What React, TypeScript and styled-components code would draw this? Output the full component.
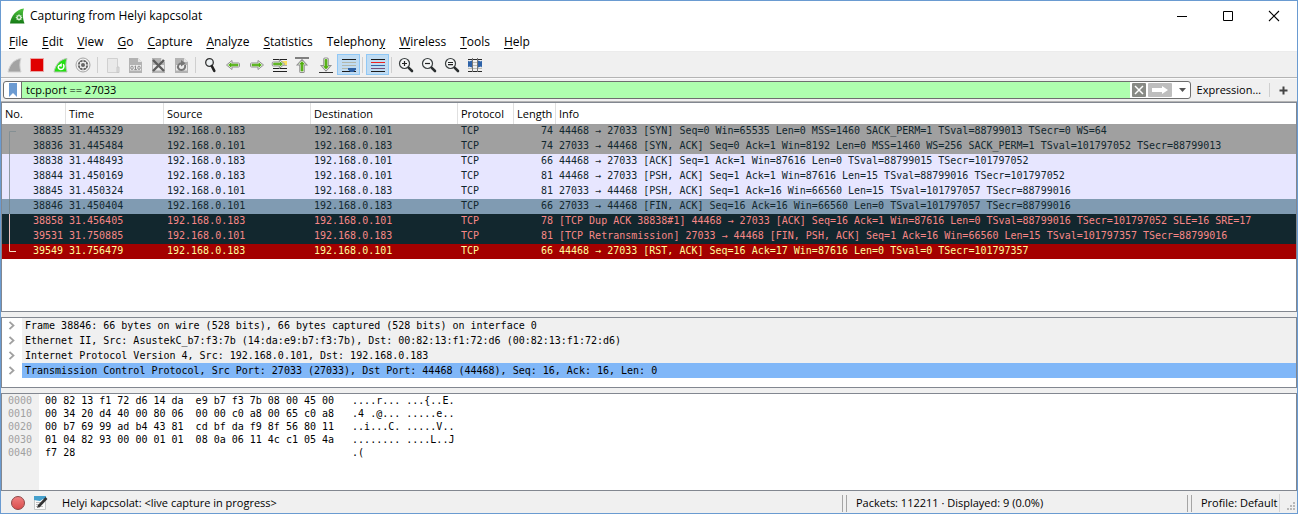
import React, { useState } from "react";
import styled, { createGlobalStyle, css } from "styled-components";

const ui = `"Open Sans", "Noto Sans", sans-serif`;
const mono = `"DejaVu Sans Mono", "Liberation Mono", monospace`;

const GlobalStyle = createGlobalStyle`
  *, *::before, *::after { box-sizing: border-box; }
  body { margin: 0; background: #f0f0f0; color: #000; font: 11px/16px ${ui}; }
  button, input { font: inherit; color: inherit; margin: 0; padding: 0; border: 0; background: none; border-radius: 0; }
  ul { list-style: none; margin: 0; padding: 0; }
  svg { display: block; flex: none; }
`;

const Window = styled.div`
  display: flex;
  flex-direction: column;
  min-height: 100vh;
  border: 1px solid #6a9bd1;
  background: #f0f0f0;
`;

const TitleBar = styled.header`
  display: flex;
  align-items: center;
  height: 30px;
  padding-left: 8px;
  gap: 5px;
  background: #fff;
`;

const Title = styled.h1`
  flex: 1;
  margin: 0;
  font-size: 12px;
  font-weight: 400;
`;

const WindowButtons = styled.div`
  display: flex;
`;

const WindowButton = styled.button`
  display: grid;
  place-items: center;
  width: 46px;
  height: 30px;
`;

const MenuBar = styled.nav`
  display: flex;
  height: 21px;
  padding-left: 1px;
  background: #fff;
  border-bottom: 1px solid #ececec;
`;

const MenuButton = styled.button`
  padding: 2px 7px 0;
  font-size: 12px;
  line-height: 18px;
  u { text-underline-offset: 2px; }
`;

const ToolBar = styled.div`
  display: flex;
  height: 26px;
  padding: 2px 0 0 2px;
  border-bottom: 1px solid #b4b4b4;
`;

const ToolButton = styled.button<{ $pressed?: boolean }>`
  width: 23px;
  height: 21px;
  padding: 2px;
  border: 1px solid ${(p) => (p.$pressed ? "#90c8f6" : "transparent")};
  background: ${(p) => (p.$pressed ? "#c0dcf3" : "transparent")};
`;

const ToolSeparator = styled.span`
  width: 1px;
  height: 16px;
  margin: 3px 3px 0 2px;
  background: #cfcfcf;
`;

const FilterBar = styled.form`
  display: flex;
  align-items: center;
  height: 24px;
  padding: 0 5px 0 2px;
  border-top: 1px solid #fafafa;
  border-bottom: 1px solid #b4b4b4;
`;

const FilterField = styled.div`
  display: flex;
  align-items: center;
  flex: 1;
  height: 18px;
  border: 1px solid #6e6e6e;
  border-radius: 3px;
  background: #fff;
  overflow: hidden;
`;

const BookmarkButton = styled.button`
  display: grid;
  place-items: center;
  width: 18px;
  height: 16px;
  border-right: 1px solid #6e6e6e;
`;

const FilterInput = styled.input`
  flex: 1;
  min-width: 0;
  height: 16px;
  padding-left: 4px;
  background: #afffaf;
  font-size: 11px;
  outline: 0;
`;

const FieldButton = styled.button<{ $width: number; $fill?: string }>`
  display: grid;
  place-items: center;
  width: ${(p) => p.$width}px;
  height: 14px;
  margin-left: 2px;
  border-radius: 1px;
  background: ${(p) => p.$fill ?? "transparent"};
`;

const ExpressionButton = styled.button`
  padding: 0 8px 0 6px;
  font-size: 11px;
`;

const AddButton = styled.button`
  display: grid;
  place-items: center;
  width: 23px;
  height: 14px;
  padding-left: 4px;
  border-left: 1px solid #cfcfcf;
`;

const panel = css`
  border: 1px solid #828790;
  background: #fff;
  overflow: hidden;
`;

const PacketPanel = styled.main`
  ${panel}
  flex: 1;
`;

const PacketTable = styled.table`
  width: 100%;
  border-collapse: separate;
  border-spacing: 0;
  table-layout: fixed;
  font: 10px/13px ${mono};
`;

const HeadCell = styled.th`
  height: 21px;
  padding: 0 3px;
  border-right: 1px solid #e0e0e0;
  text-align: left;
  font: 400 11px/21px ${ui};
  white-space: nowrap;
  &:last-child { border-right: 0; }
`;

type Tone = "syn" | "tcp" | "selected" | "bad" | "rst";

const tones: Record<Tone, { bg: string; fg: string; line: string }> = {
  syn: { bg: "#a0a0a0", fg: "#12272e", line: "#848f93" },
  tcp: { bg: "#e7e6ff", fg: "#12272e", line: "#8f9ba6" },
  selected: { bg: "#809bb2", fg: "#12272e", line: "#75878f" },
  bad: { bg: "#12272e", fg: "#f78787", line: "#eec4c4" },
  rst: { bg: "#a40000", fg: "#fffc9c", line: "#f6dfc4" },
};

const PacketRow = styled.tr<{ $tone: Tone }>`
  background: ${(p) => tones[p.$tone].bg};
  color: ${(p) => tones[p.$tone].fg};
`;

const Cell = styled.td<{ $right?: boolean }>`
  height: 15px;
  padding: 0 3px;
  vertical-align: top;
  text-align: ${(p) => (p.$right ? "right" : "left")};
  white-space: pre;
  overflow: hidden;
`;

const NumberCell = styled.div`
  display: flex;
  justify-content: space-between;
`;

const Splitter = styled.div`
  height: 5px;
`;

const DetailsPanel = styled.section`
  ${panel}
  min-height: 71px;
  padding-bottom: 9px;
`;

const DetailItem = styled.li`
  display: flex;
  align-items: center;
  height: 15px;
`;

const Expander = styled.button`
  display: grid;
  place-items: center;
  width: 20px;
  height: 15px;
`;

const DetailText = styled.span<{ $selected?: boolean }>`
  flex: 1;
  padding-left: 3px;
  background: ${(p) => (p.$selected ? "#80b7f8" : "#f0f0f0")};
  font: 10px/15px ${mono};
  white-space: nowrap;
`;

const BytesPanel = styled.section`
  ${panel}
  display: flex;
  min-height: 98px;
  background: linear-gradient(90deg, #f0f0f0 37px, #fff 37px);
`;

const BytesTable = styled.table`
  align-self: flex-start;
  border-spacing: 0;
  font: 10px/13px ${mono};
  white-space: pre;
  th { padding: 0 13px 0 6px; font-weight: 400; color: #a0a0a0; }
  td { padding: 0 18px 0 0; }
`;

const StatusBar = styled.footer`
  display: flex;
  align-items: center;
  height: 22px;
  padding-top: 2px;
  font-size: 11px;
`;

const StatusButton = styled.button`
  display: grid;
  place-items: center;
  width: 23px;
  height: 20px;
  &:first-child { margin-left: 5px; }
`;

const StatusText = styled.span`
  flex: 1;
  padding-left: 10px;
`;

const StatusSection = styled.span<{ $width: number }>`
  display: flex;
  align-items: center;
  width: ${(p) => p.$width}px;
  gap: 9px;
  white-space: nowrap;
  &::before {
    content: "";
    width: 5px;
    height: 17px;
    border: solid #a5a5a5;
    border-width: 0 1px;
  }
`;

const Grip = styled.span`
  display: flex;
  align-items: flex-end;
  width: 18px;
  height: 18px;
  padding: 0 0 1px 7px;
  border-left: 1px solid #d4d4d4;
`;

/* ---------- icons ---------- */

const Svg = ({ children, w = 16, h = 16 }: { children: React.ReactNode; w?: number; h?: number }) => (
  <svg width={w} height={h} viewBox={`0 0 ${w} ${h}`} fill="none" aria-hidden="true">{children}</svg>
);

const LogoIcon = () => (
  <Svg>
    <defs>
      <linearGradient id="fin" x1="0" y1="0" x2="0" y2="1">
        <stop offset="0" stopColor="#4fc43d" /><stop offset="1" stopColor="#157a15" />
      </linearGradient>
    </defs>
    <path d="M1 15.5C2 8 7 1.5 15 .5C13.5 4 13.5 10 15.5 15.5Z" fill="url(#fin)" />
    <circle cx="10" cy="9.5" r="2.6" fill="#d6efd2" />
    <path d="M10 6.3v6.4M6.8 9.5h6.4M7.8 7.3l4.4 4.4M12.2 7.3l-4.4 4.4" stroke="#d6efd2" />
    <circle cx="10" cy="9.5" r="1.2" fill="#3a9a35" />
  </Svg>
);

const FinIcon = () => (
  <Svg>
    <path d="M2 15C3.500 8 7.500 2.500 15 1.500C13.500 5 13.500 10.500 15 15Z" fill="#a3a3a3" stroke="#d2d2d2" />
  </Svg>
);
const StopIcon = () => <Svg><path d="M1.500 1.500h13v13h-13z" fill="#e00000" stroke="#e9a5a5" /></Svg>;
const RestartIcon = () => (
  <Svg>
    <path d="M2 15C3.500 8 7.500 2.500 15 1.500C13.500 5 13.500 10.500 15 15Z" fill="#22e010" stroke="#b5c4b3" />
    <path d="M11.300 7.200c1.600 2.600.2 5.300-2.400 5.300C6.400 12.500 5.600 10.200 6.800 8.600" stroke="#fff" strokeWidth="1.500" />
    <path d="M5.700 9L9.800 6V9.800Z" fill="#fff" />
  </Svg>
);
const OptionsIcon = () => (
  <Svg>
    <circle cx="8" cy="8" r="7" fill="#f4f4f4" stroke="#a4a4a4" />
    <circle cx="8" cy="8" r="5.200" fill="#666" />
    <path d="M8 3v2.500M8 10.500v2.500M3 8h2.500M10.500 8h2.500M4.500 4.500l1.600 1.600M9.900 9.900l1.600 1.600M11.500 4.500l-1.600 1.600M6.100 9.900l-1.600 1.600" stroke="#e4e4e4" />
    <circle cx="8" cy="8" r="2.600" fill="#666" stroke="#eee" strokeWidth="1.200" />
  </Svg>
);
const OpenIcon = () => (
  <Svg>
    <path d="M3.500 1.500h10v14h-10z" fill="#e9e9e9" stroke="#d0d0d0" />
    <path d="M13 10h2v5.500h-2z" fill="#ddd" stroke="#c8c8c8" />
  </Svg>
);
const Page = () => (
  <>
    <path d="M2 1h9l4 4v11H2z" fill="#b3b3b3" />
    <path d="M3 8h11v5.500H3z" fill="#ebebeb" />
    <path d="M11 1v4h4z" fill="#e6e6e6" />
  </>
);
const SaveIcon = () => (
  <Svg>
    <Page />
    <ellipse cx="5" cy="10.800" rx="1.200" ry="1.700" stroke="#8c8c8c" />
    <path d="M7.500 9.700l1-.8v4M7.300 12.600h2.600" stroke="#8c8c8c" />
    <ellipse cx="12" cy="10.800" rx="1.200" ry="1.700" stroke="#8c8c8c" />
  </Svg>
);
const CloseFileIcon = () => (
  <Svg>
    <Page />
    <path d="M3 3l11 11M14 3L3 14" stroke="#5d5d5d" strokeWidth="2.400" />
  </Svg>
);
const ReloadIcon = () => (
  <Svg>
    <Page />
    <path d="M12 8c.8 3-1 5-3.600 5C5.500 13 4 10 5.600 7.700C6.400 6.600 7.500 6.300 9 6.300" stroke="#777" strokeWidth="2" />
    <path d="M8 3L12.500 6.300L8 9.500Z" fill="#777" />
  </Svg>
);
const FindIcon = () => (
  <Svg>
    <circle cx="7.500" cy="5.500" r="3.800" fill="#eef2f4" stroke="#333" strokeWidth="1.300" />
    <path d="M9.800 9L12.300 13.800" stroke="#222" strokeWidth="2.600" strokeLinecap="round" />
  </Svg>
);
const ArrowShape = ({ t }: { t?: string }) => (
  <g transform={t}>
    <path d="M1.500 8L7 3.500V6h6.500q1 0 1 1v2q0 1-1 1H7v2.500Z" fill="#fff" stroke="#8f8f8f" />
    <path d="M3.600 8L6 6V7.200h7v1.600H6V10Z" fill="#4fae0c" stroke="#4fae0c" strokeWidth=".8" />
  </g>
);
const BackIcon = () => <Svg><ArrowShape /></Svg>;
const ForwardIcon = () => <Svg><ArrowShape t="matrix(-1 0 0 1 17 0)" /></Svg>;
const GoToIcon = () => (
  <Svg>
    <path d="M2 2.500h14M2 11.500h14M2 14.500h14" stroke="#222" />
    <path d="M10 4h6v4h-6z" fill="#f8df62" />
    <path d="M2 8.500h14" stroke="#aaa" />
    <ArrowShape t="matrix(-.95 0 0 1 15 -1)" />
  </Svg>
);
const FirstIcon = () => (
  <Svg><path d="M1 1h14" stroke="#333" strokeWidth="1.200" /><ArrowShape t="matrix(0 1 1.100 0 -.8 1)" /></Svg>
);
const LastIcon = () => (
  <Svg><path d="M2 15.500h14" stroke="#333" /><ArrowShape t="matrix(0 -1 1.100 0 .2 15.500)" /></Svg>
);
const AutoScrollIcon = () => (
  <Svg>
    <path d="M2 2.500h14M2 14.500h14" stroke="#1c1c1c" />
    <path d="M2 5.500h14M2 8.500h14M2 11.500h14" stroke="#b3b7ab" />
    <path d="M8 11h8v1.500L13.500 15h-3L8 12.500Z" fill="#2f62a6" />
  </Svg>
);
const ColorizeIcon = () => (
  <Svg>
    <path d="M2 2.500h14M2 14.500h14" stroke="#1c1c1c" />
    <path d="M2 5.500h14" stroke="#ef2020" />
    <path d="M2 8.500h14" stroke="#3465a4" />
    <path d="M2 11.500h14" stroke="#75507b" />
  </Svg>
);
const ZoomIcon = ({ mark }: { mark: string }) => (
  <Svg>
    <circle cx="6.500" cy="6.500" r="5" fill="#f4f6f6" stroke="#3a3f40" strokeWidth="1.200" />
    <path d={mark} stroke="#222" strokeWidth="1.200" />
    <path d="M10.800 10.800L14 14" stroke="#2a2e2f" strokeWidth="2.600" strokeLinecap="round" />
  </Svg>
);
const ResizeIcon = () => (
  <Svg>
    <path d="M1 5.500h14M1 8.500h14M1 11.500h14" stroke="#b9bbb5" />
    <path d="M1 2.500h14M1 14.500h14" stroke="#2a2a2a" />
    <path d="M5.500 1v14M10.500 1v14" stroke="#777" />
    <path d="M1 3.500l1 1 3-1v7l-3-1-1 1zM15 3.500l-1 1-3-1v7l3-1 1 1z" fill="#2d62a8" />
  </Svg>
);

/* ---------- data ---------- */

const menus = [
  ["", "F", "ile"], ["", "E", "dit"], ["", "V", "iew"], ["", "G", "o"], ["", "C", "apture"], ["", "A", "nalyze"],
  ["", "S", "tatistics"], ["Telephon", "y", ""], ["", "W", "ireless"], ["", "T", "ools"], ["", "H", "elp"],
];

type Tool = { label: string; icon: React.ReactNode; toggle?: boolean };
const toolGroups: Tool[][] = [
  [
    { label: "Start capture", icon: <FinIcon /> },
    { label: "Stop capture", icon: <StopIcon /> },
    { label: "Restart capture", icon: <RestartIcon /> },
    { label: "Capture options", icon: <OptionsIcon /> },
  ],
  [
    { label: "Open file", icon: <OpenIcon /> },
    { label: "Save file", icon: <SaveIcon /> },
    { label: "Close file", icon: <CloseFileIcon /> },
    { label: "Reload file", icon: <ReloadIcon /> },
  ],
  [
    { label: "Find packet", icon: <FindIcon /> },
    { label: "Previous packet", icon: <BackIcon /> },
    { label: "Next packet", icon: <ForwardIcon /> },
    { label: "Go to packet", icon: <GoToIcon /> },
    { label: "First packet", icon: <FirstIcon /> },
    { label: "Last packet", icon: <LastIcon /> },
    { label: "Auto scroll", icon: <AutoScrollIcon />, toggle: true },
  ],
  [{ label: "Colorize packets", icon: <ColorizeIcon />, toggle: true }],
  [
    { label: "Zoom in", icon: <ZoomIcon mark="M4 6.500h5M6.500 4v5" /> },
    { label: "Zoom out", icon: <ZoomIcon mark="M4 6.500h5" /> },
    { label: "Normal size", icon: <ZoomIcon mark="M4 5.500h5M4 7.700h5" /> },
    { label: "Resize columns", icon: <ResizeIcon /> },
  ],
];

const columns: [string, number | undefined][] = [
  ["No.", 64], ["Time", 98], ["Source", 147], ["Destination", 147], ["Protocol", 56], ["Length", 42], ["Info", undefined],
];

const A = "192.168.0.183";
const B = "192.168.0.101";
const packets: { no: string; time: string; src: string; dst: string; len: number; info: string; tone: Tone }[] = [
  { no: "38835", time: "31.445329", src: A, dst: B, len: 74, tone: "syn", info: "44468 → 27033 [SYN] Seq=0 Win=65535 Len=0 MSS=1460 SACK_PERM=1 TSval=88799013 TSecr=0 WS=64" },
  { no: "38836", time: "31.445484", src: B, dst: A, len: 74, tone: "syn", info: "27033 → 44468 [SYN, ACK] Seq=0 Ack=1 Win=8192 Len=0 MSS=1460 WS=256 SACK_PERM=1 TSval=101797052 TSecr=88799013" },
  { no: "38838", time: "31.448493", src: A, dst: B, len: 66, tone: "tcp", info: "44468 → 27033 [ACK] Seq=1 Ack=1 Win=87616 Len=0 TSval=88799015 TSecr=101797052" },
  { no: "38844", time: "31.450169", src: A, dst: B, len: 81, tone: "tcp", info: "44468 → 27033 [PSH, ACK] Seq=1 Ack=1 Win=87616 Len=15 TSval=88799016 TSecr=101797052" },
  { no: "38845", time: "31.450324", src: B, dst: A, len: 81, tone: "tcp", info: "27033 → 44468 [PSH, ACK] Seq=1 Ack=16 Win=66560 Len=15 TSval=101797057 TSecr=88799016" },
  { no: "38846", time: "31.450404", src: B, dst: A, len: 66, tone: "selected", info: "27033 → 44468 [FIN, ACK] Seq=16 Ack=16 Win=66560 Len=0 TSval=101797057 TSecr=88799016" },
  { no: "38858", time: "31.456405", src: A, dst: B, len: 78, tone: "bad", info: "[TCP Dup ACK 38838#1] 44468 → 27033 [ACK] Seq=16 Ack=1 Win=87616 Len=0 TSval=88799016 TSecr=101797052 SLE=16 SRE=17" },
  { no: "39531", time: "31.750885", src: B, dst: A, len: 81, tone: "bad", info: "[TCP Retransmission] 27033 → 44468 [FIN, PSH, ACK] Seq=1 Ack=16 Win=66560 Len=15 TSval=101797357 TSecr=88799016" },
  { no: "39549", time: "31.756479", src: A, dst: B, len: 66, tone: "rst", info: "44468 → 27033 [RST, ACK] Seq=16 Ack=17 Win=87616 Len=0 TSval=0 TSecr=101797357" },
];

const details = [
  "Frame 38846: 66 bytes on wire (528 bits), 66 bytes captured (528 bits) on interface 0",
  "Ethernet II, Src: AsustekC_b7:f3:7b (14:da:e9:b7:f3:7b), Dst: 00:82:13:f1:72:d6 (00:82:13:f1:72:d6)",
  "Internet Protocol Version 4, Src: 192.168.0.101, Dst: 192.168.0.183",
  "Transmission Control Protocol, Src Port: 27033 (27033), Dst Port: 44468 (44468), Seq: 16, Ack: 16, Len: 0",
];

const bytes = [
  ["0000", "00 82 13 f1 72 d6 14 da  e9 b7 f3 7b 08 00 45 00", "....r... ...{..E."],
  ["0010", "00 34 20 d4 40 00 80 06  00 00 c0 a8 00 65 c0 a8", ".4 .@... .....e.."],
  ["0020", "00 b7 69 99 ad b4 43 81  cd bf da f9 8f 56 80 11", "..i...C. .....V.."],
  ["0030", "01 04 82 93 00 00 01 01  08 0a 06 11 4c c1 05 4a", "........ ....L..J"],
  ["0040", "f7 28", ".("],
];

/* Line in the first column that ties the packets of one conversation together. */
const Bracket = ({ index, color }: { index: number; color: string }) => {
  const last = packets.length - 1;
  const d = index === 0 ? "M11 7.500H4.500V15" : index === last ? "M4.500 0V7.500H11" : "M4.500 0V15";
  return <Svg w={14} h={15}><path d={d} stroke={color} /></Svg>;
};

export default function App() {
  const [filter, setFilter] = useState("tcp.port == 27033");
  return (
    <Window>
      <GlobalStyle />
      <TitleBar>
        <LogoIcon />
        <Title>Capturing from Helyi kapcsolat</Title>
        <WindowButtons>
          <WindowButton aria-label="Minimize"><Svg w={12} h={12}><path d="M1 6.500h10" stroke="#000" /></Svg></WindowButton>
          <WindowButton aria-label="Maximize"><Svg w={12} h={12}><path d="M1.500 1.500h9v9h-9z" stroke="#000" /></Svg></WindowButton>
          <WindowButton aria-label="Close"><Svg w={12} h={12}><path d="M1 1l10 10M11 1L1 11" stroke="#000" strokeWidth="1.100" /></Svg></WindowButton>
        </WindowButtons>
      </TitleBar>
      <MenuBar>
        {menus.map(([before, key, after]) => (
          <MenuButton key={before + key + after}>{before}<u>{key}</u>{after}</MenuButton>
        ))}
      </MenuBar>
      <ToolBar>
        {toolGroups.map((group, i) => (
          <React.Fragment key={i}>
            {i > 0 && <ToolSeparator />}
            {group.map((tool) => (
              <ToolButton key={tool.label} aria-label={tool.label} aria-pressed={tool.toggle} $pressed={tool.toggle}>
                {tool.icon}
              </ToolButton>
            ))}
          </React.Fragment>
        ))}
      </ToolBar>
      <FilterBar onSubmit={(e) => e.preventDefault()}>
        <FilterField>
          <BookmarkButton type="button" aria-label="Bookmarks">
            <Svg w={10} h={14}><path d="M1 0h8v14L5 10L1 14Z" fill="#6c9bd2" /></Svg>
          </BookmarkButton>
          <FilterInput aria-label="Display filter" value={filter} onChange={(e) => setFilter(e.target.value)} />
          <FieldButton type="button" $width={14} $fill="#888a85" aria-label="Clear filter">
            <Svg w={12} h={12}><path d="M2 2l8 8M10 2L2 10" stroke="#fff" strokeWidth="1.500" /></Svg>
          </FieldButton>
          <FieldButton $width={24} $fill="#bebebe" aria-label="Apply filter">
            <Svg w={18} h={10}><path d="M1 3h10V1l6 4l-6 4V7H1Z" fill="#fff" /></Svg>
          </FieldButton>
          <FieldButton type="button" $width={16} aria-label="Recent filters">
            <Svg w={8} h={5}><path d="M1 0h7L4.500 4Z" fill="#555" /></Svg>
          </FieldButton>
        </FilterField>
        <ExpressionButton type="button">Expression…</ExpressionButton>
        <AddButton type="button" aria-label="Add filter button">
          <Svg w={9} h={9}><path d="M4.500 0.500v8M.5 4.500h8" stroke="#444" strokeWidth="2" /></Svg>
        </AddButton>
      </FilterBar>
      <PacketPanel>
        <PacketTable>
          <colgroup>
            {columns.map(([name, width]) => <col key={name} width={width} />)}
          </colgroup>
          <thead>
            <tr>{columns.map(([name]) => <HeadCell key={name} scope="col">{name}</HeadCell>)}</tr>
          </thead>
          <tbody>
            {packets.map((p, i) => (
              <PacketRow key={p.no} $tone={p.tone}>
                <Cell><NumberCell><Bracket index={i} color={tones[p.tone].line} />{p.no}</NumberCell></Cell>
                <Cell>{p.time}</Cell>
                <Cell>{p.src}</Cell>
                <Cell>{p.dst}</Cell>
                <Cell>TCP</Cell>
                <Cell $right>{p.len}</Cell>
                <Cell>{p.info}</Cell>
              </PacketRow>
            ))}
          </tbody>
        </PacketTable>
      </PacketPanel>
      <Splitter />
      <DetailsPanel aria-label="Packet details">
        <ul>
          {details.map((text, i) => (
            <DetailItem key={text}>
              <Expander aria-label="Expand">
                <Svg w={8} h={9}><path d="M1.500 .8L5.500 4.500L1.500 8.200" stroke="#a0a0a0" strokeWidth="1.800" /></Svg>
              </Expander>
              <DetailText $selected={i === 3}>{text}</DetailText>
            </DetailItem>
          ))}
        </ul>
      </DetailsPanel>
      <Splitter />
      <BytesPanel aria-label="Packet bytes">
        <BytesTable>
          <tbody>
            {bytes.map(([offset, hex, ascii]) => (
              <tr key={offset}><th scope="row">{offset}</th><td>{hex}</td><td>{ascii}</td></tr>
            ))}
          </tbody>
        </BytesTable>
      </BytesPanel>
      <StatusBar>
        <StatusButton aria-label="Expert information">
          <Svg>
            <defs>
              <linearGradient id="dot" x1="0" y1="0" x2="0" y2="1">
                <stop offset="0" stopColor="#f08080" /><stop offset="1" stopColor="#d94c4c" />
              </linearGradient>
            </defs>
            <circle cx="8" cy="8" r="6.500" fill="url(#dot)" stroke="#8c4a4a" />
          </Svg>
        </StatusButton>
        <StatusButton aria-label="Capture file properties">
          <Svg>
            <path d="M1.500 1.500h11v13h-11z" fill="#fafafa" stroke="#c4c8c8" />
            <path d="M1 1h12v4l-3-1-3 2-6-1z" fill="#45a0cc" />
            <path d="M3 7.500h6M3 9.500h5M3 11.500h7" stroke="#bbb" />
            <path d="M5.500 11.500L13.500 3" stroke="#333" strokeWidth="2.600" />
            <path d="M4 13l1-2.600L6.700 12z" fill="#333" />
          </Svg>
        </StatusButton>
        <StatusText>Helyi kapcsolat: &lt;live capture in progress&gt;</StatusText>
        <StatusSection $width={345}>Packets: 112211 · Displayed: 9 (0.0%)</StatusSection>
        <StatusSection $width={92}>Profile: Default</StatusSection>
        <Grip>
          <Svg w={9} h={9}><path d="M6 0h2v2H6zM3 3h2v2H3zM6 3h2v2H6zM0 6h2v2H0zM3 6h2v2H3zM6 6h2v2H6z" fill="#b8b8b8" /></Svg>
        </Grip>
      </StatusBar>
    </Window>
  );
}
